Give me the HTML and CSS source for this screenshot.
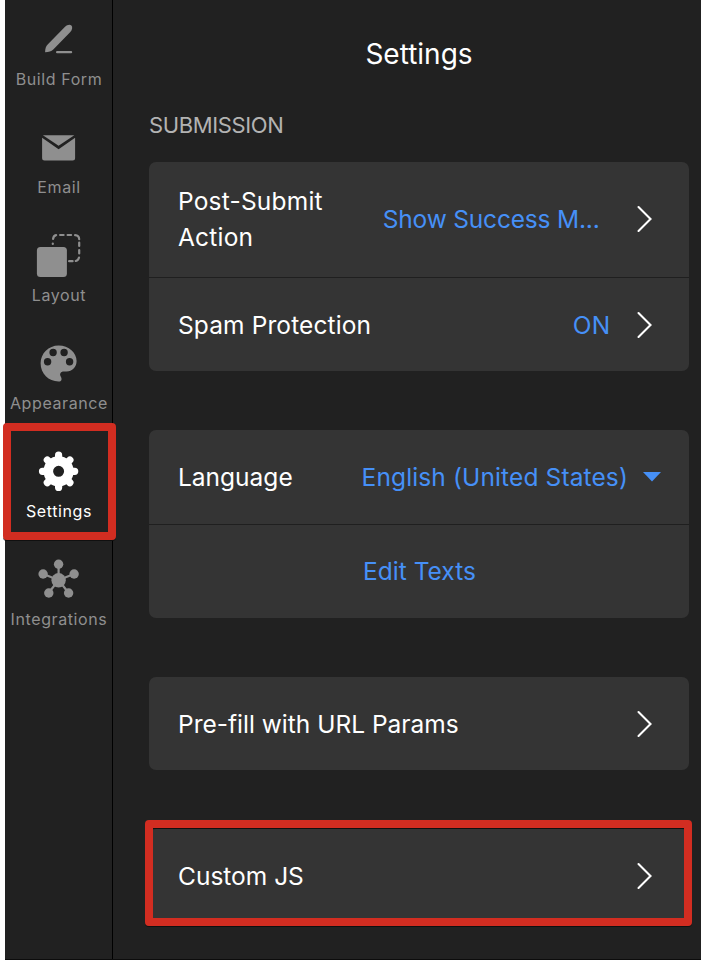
FILE: index.html
```html
<!DOCTYPE html>
<html lang="en">
<head>
<meta charset="utf-8">
<title>Settings</title>
<link rel="stylesheet" href="styles.css">
</head>
<body>
<div class="app">
  <nav class="sidebar">
    <a class="nav-item">
      <svg class="nav-icon" viewBox="0.4 0 48 48"><path d="M10.500 37.200c.1-3.700.8-5.900 2.800-7.900L30.200 12c2.300-2.300 5.200-2.800 6.600-1.400s1 4.400-1.300 6.700L18.700 34.400c-2 2-4.500 2.700-8.200 2.800z"/><path class="line" d="M22.500 37.200h14"/></svg>
      <span class="nav-label">Build Form</span>
    </a>
    <a class="nav-item">
      <svg class="nav-icon" viewBox="0.4 0 48 48"><path d="M8.300 12.300h31.400L24 22.800z"/><path d="M7.500 14.800 24 26.200l16.500-11.400v20.300a2.500 2.500 0 0 1-2.500 2.500H10a2.500 2.500 0 0 1-2.500-2.500z"/></svg>
      <span class="nav-label">Email</span>
    </a>
    <a class="nav-item">
      <svg class="nav-icon" viewBox="0.4 0 48 48"><g transform="translate(0 -8)"><path class="dashes" d="M18.200 21v-.5M18.500 16c.2-2.500 1.200-3.500 3-3.900M25.500 12h3.500M33 12h3.500M40.500 12.200c2.700.2 4 1.400 4.100 4M44.600 19.500V23M44.600 27v3.500M44.400 34.500c-.4 2-1.200 3-3.200 3.500M38 38.200h-3.500"/><rect x="2.300" y="24" width="30" height="30" rx="3.500"/></g></svg>
      <span class="nav-label">Layout</span>
    </a>
    <a class="nav-item">
      <svg class="nav-icon" viewBox="0.4 0 48 48"><path fill-rule="evenodd" d="M24 6.400c10.300 0 18 7.300 18 15.700 0 6.300-4.500 10.400-10 10.400h-2.800c-3 0-4.500 2.200-3.200 4.800.8 1.600 1.200 2.400.8 3.700-.4 1-1.300 1.500-2.800 1.500C14 42.500 6 34.500 6 24.300 6 14.300 14 6.400 24 6.400zM13 19a3.700 3.700 0 1 0 0 7.400 3.700 3.700 0 0 0 0-7.400zm5.500-9.200a3.700 3.700 0 1 0 0 7.400 3.700 3.700 0 0 0 0-7.400zm11 0a3.700 3.700 0 1 0 0 7.400 3.700 3.700 0 0 0 0-7.400zM35 19a3.700 3.700 0 1 0 0 7.400 3.700 3.700 0 0 0 0-7.400z"/></svg>
      <span class="nav-label">Appearance</span>
    </a>
    <a class="nav-item active">
      <svg class="nav-icon" viewBox="0.4 0 48 48"><g fill="none" stroke="currentColor"><circle cx="24" cy="24.300" r="10.300" stroke-width="9.600"/><path stroke-width="7.200" stroke-linecap="round" d="M24 8.200V13M24 35.600v4.800M7.900 24.300h4.800M35.300 24.300h4.800M12.700 13l3.300 3.300M32 32.300l3.300 3.300M35.300 13 32 16.300M16 32.300l-3.300 3.300"/></g></svg>
      <span class="nav-label">Settings</span>
      <span class="marker marker-nav"></span>
    </a>
    <a class="nav-item">
      <svg class="nav-icon" viewBox="0.4 0 48 48"><path class="spokes" d="M24 25V9M24 25 8.500 19M24 25l15.500-6M24 25 14 38M24 25l10 13"/><circle cx="24" cy="25.300" r="7.200"/><circle cx="24" cy="9.300" r="4.700"/><circle cx="8.500" cy="19" r="4.700"/><circle cx="39.500" cy="19" r="4.700"/><circle cx="14.200" cy="38" r="4.700"/><circle cx="34" cy="38" r="4.700"/></svg>
      <span class="nav-label">Integrations</span>
    </a>
  </nav>
  <main class="panel">
    <h1 class="title">Settings</h1>
    <h2 class="section">SUBMISSION</h2>
    <section class="card">
      <div class="row tall">
        <span class="label post">Post-Submit Action</span>
        <span class="value success">Show Success M...</span>
        <svg class="chevron" viewBox="0.5 0 16 28"><path d="m2 2 12 12L2 26"/></svg>
      </div>
      <div class="row">
        <span class="label spam">Spam Protection</span>
        <span class="value on">ON</span>
        <svg class="chevron" viewBox="0.5 0 16 28"><path d="m2 2 12 12L2 26"/></svg>
      </div>
    </section>
    <section class="card">
      <div class="row">
        <span class="label">Language</span>
        <span class="value language">English (United States)</span>
        <svg class="caret" viewBox="0 0 18 10"><path d="M0 0h18L9 9.500z"/></svg>
      </div>
      <div class="row centered"><span class="value">Edit Texts</span></div>
    </section>
    <section class="card">
      <div class="row">
        <span class="label">Pre-fill with URL Params</span>
        <svg class="chevron" viewBox="0.5 0 16 28"><path d="m2 2 12 12L2 26"/></svg>
      </div>
    </section>
    <section class="card">
      <div class="row">
        <span class="label">Custom JS</span>
        <svg class="chevron" viewBox="0.5 0 16 28"><path d="m2 2 12 12L2 26"/></svg>
      </div>
      <span class="marker marker-card"></span>
    </section>
  </main>
</div>
</body>
</html>
```
FILE: styles.css
```css
* { box-sizing: border-box; }
body {
  margin: 0;
  background: #fff;
  font-family: Inter, "Liberation Sans", sans-serif;
  color: #fff;
}
.app {
  display: flex;
  height: 960px;
  margin-left: 5px;
  background: #212121;
  border-bottom: 1px solid #0c0c0c;
}
.sidebar {
  flex: none;
  width: 108px;
  border-right: 1px solid #000;
}
.nav-item {
  position: relative;
  display: flex;
  flex-direction: column;
  align-items: center;
  height: 108px;
  padding-top: 15px;
  color: #8f8f8f;
}
.nav-item.active { color: #fff; }
.nav-icon {
  display: block;
  width: 48px;
  height: 48px;
  fill: currentColor;
  overflow: visible;
}
.line, .dashes, .spokes {
  fill: none;
  stroke: currentColor;
  stroke-width: 2.2;
  stroke-linecap: round;
}
.nav-label {
  margin-top: 6px;
  padding-left: 1px;
  font-size: 16px;
  line-height: 20px;
  letter-spacing: 0.6px;
  white-space: nowrap;
}
.panel {
  flex: 1;
  padding: 0 12px 0 36px;
}
.title {
  margin: 0;
  padding-top: 36px;
  font-size: 28px;
  line-height: 36px;
  font-weight: 400;
  text-align: center;
}
.section {
  margin: 40px 0 24px;
  font-size: 22px;
  line-height: 26px;
  font-weight: 400;
  letter-spacing: -0.38px;
  color: #b3b3b3;
}
.card {
  position: relative;
  margin-bottom: 59px;
  border-radius: 7px;
  background: #343434;
}
.row {
  display: flex;
  align-items: center;
  height: 93px;
  padding: 0 36.400px 0 29px;
  font-size: 24.5px;
  line-height: 36px;
  letter-spacing: 0;
}
.row + .row {
  height: 94px;
  border-top: 1px solid #1f1f1f;
}
.row.tall { height: 115px; padding-bottom: 1px; }
.row:has(.caret) { height: 94px; padding-right: 28px; }
.row.centered { justify-content: center; padding: 0 0 2px 1px; }
.label { flex: 1; white-space: nowrap; }
.label.post {
  flex: none;
  width: 190px;
  padding-right: 30px;
  letter-spacing: 0.2px;
  white-space: normal;
}
.label.spam { letter-spacing: 0.12px; }
.value { color: #4690f7; white-space: nowrap; }
.value.success { margin-left: auto; margin-right: 11px; letter-spacing: -0.18px; }
.value.on { letter-spacing: 0.1px; }
.value.language { letter-spacing: 0.13px; }
.chevron {
  flex: none;
  width: 16px;
  height: 28px;
  margin-left: 26.400px;
  fill: none;
  stroke: #fff;
  stroke-width: 2.1;
  stroke-linecap: round;
}
.value.success + .chevron { margin-left: 26px; }
.caret {
  flex: none;
  width: 18px;
  height: 10px;
  margin-left: 15px;
  fill: #4690f7;
}
.marker {
  position: absolute;
  border: 8px solid #d22d21;
  border-radius: 4px;
  box-shadow: 0 1px 0 #101010;
}
.marker-nav { left: -2px; top: -9px; width: 113px; height: 117px; }
.marker-card { left: -4px; top: -9px; width: 547px; height: 106px; }
.marker-card::after {
  content: "";
  display: block;
  height: 1px;
  background: #101010;
}
```
